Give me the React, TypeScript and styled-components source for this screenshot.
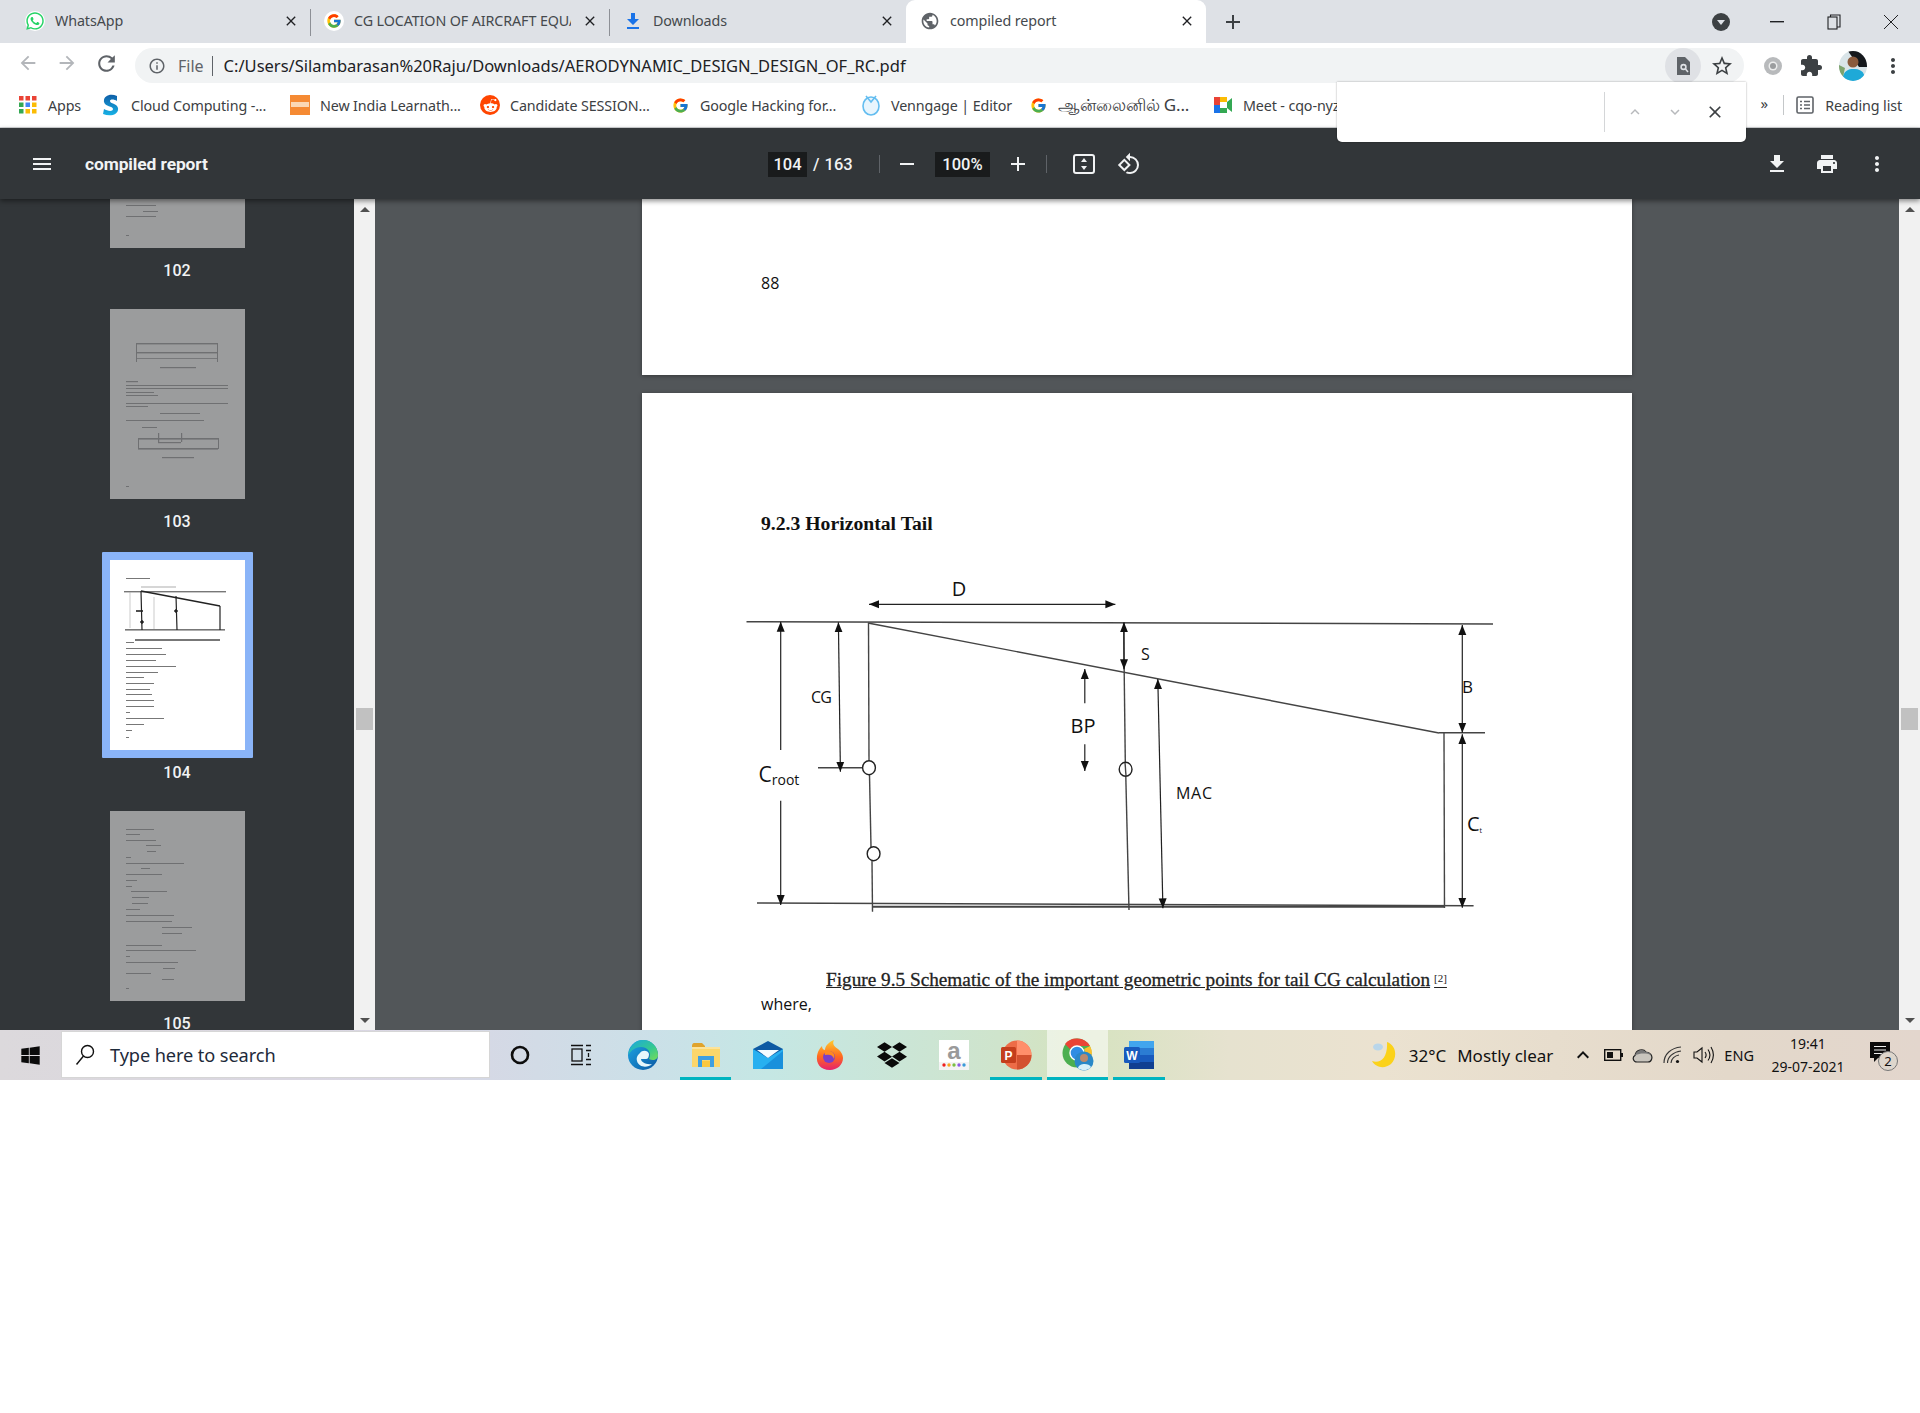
import React from "react";
import styled, { createGlobalStyle } from "styled-components";
import { FcGoogle } from "react-icons/fc";
import { FaWhatsapp, FaWindows, FaDropbox, FaRedditAlien } from "react-icons/fa";
import {
  MdArrowBack, MdArrowForward, MdRefresh, MdInfoOutline, MdClose, MdAdd, MdRemove, MdPublic,
  MdStarBorder, MdExtension, MdMoreVert, MdExpandLess, MdExpandMore, MdMenu, MdFileDownload,
  MdPrint, MdRotate90DegreesCcw, MdKeyboardArrowUp,
} from "react-icons/md";

const Global = createGlobalStyle`
  html, body { margin: 0; padding: 0; background: #fff; width: 1920px; height: 1413px; overflow: hidden; }
  * { box-sizing: border-box; }
  #root { font-family: "Noto Sans", "Liberation Sans", sans-serif; }
`;

const Screen = styled.div`
  width: 1920px; height: 1080px; display: flex; flex-direction: column; position: relative; overflow: hidden;
`;

/* ---------- tab strip ---------- */
const TabStrip = styled.div`
  height: 43px; background: #dee1e6; display: flex; align-items: stretch; padding-left: 17px; flex: none;
`;
const Tab = styled.div<{ $w: number; $active?: boolean; $sep?: boolean; $pad?: number }>`
  width: ${p => p.$w}px; display: flex; align-items: center; padding: 0 8px 2px ${p => p.$pad ?? 14}px; position: relative;
  background: ${p => (p.$active ? "#fff" : "transparent")};
  border-radius: ${p => (p.$active ? "9px 9px 0 0" : "0")};
  &::before {
    content: ""; display: ${p => (p.$sep ? "block" : "none")}; position: absolute; left: 0; top: 9px; bottom: 7px;
    width: 1px; background: #8d9096;
  }
`;
const TabIcon = styled.span<{ $chip?: boolean }>`
  width: 20px; height: 20px; display: flex; align-items: center; justify-content: center; flex: none; margin-right: 10px; border-radius: 50%;
  background: ${p => (p.$chip ? "#fff" : "transparent")};
`;
const TabTitle = styled.span`
  flex: 1; min-width: 0; font-size: 14.3px; color: #45494d; white-space: nowrap; overflow: hidden; letter-spacing: -0.1px; margin-right: 11px;
`;
const TabClose = styled.span`
  width: 16px; height: 16px; display: flex; align-items: center; justify-content: center; color: #202124; flex: none; margin-right: 3px; font-size: 16px;
`;
const NewTab = styled.span`
  width: 30px; margin-left: 12px; display: flex; align-items: center; justify-content: center; color: #3c4043; font-size: 24px;
`;
const WindowControls = styled.div`
  margin-left: auto; display: flex; align-items: center; padding-right: 20px;
`;
const ProfileDot = styled.span`
  width: 18px; height: 18px; border-radius: 50%; background: #3c4043; position: relative; margin-right: 38px;
  &::after {
    content: ""; position: absolute; left: 5px; top: 7px; border-left: 4px solid transparent; border-right: 4px solid transparent; border-top: 5px solid #dee1e6;
  }
`;
const WinButton = styled.span<{ $gap?: number }>`
  width: 18px; height: 18px; display: flex; align-items: center; justify-content: center; margin-right: ${p => p.$gap ?? 0}px; color: #3c4043;
`;

/* ---------- address row ---------- */
const AddressRow = styled.div`
  height: 40px; background: #fff; display: flex; align-items: center; flex: none; position: relative;
`;
const NavButton = styled.span<{ $w: number; $dim?: boolean }>`
  width: ${p => p.$w}px; display: flex; justify-content: center; font-size: 22px; color: ${p => (p.$dim ? "#b3b6ba" : "#5f6368")};
`;
const Omnibox = styled.div`
  width: 1609px; height: 35px; margin-top: 5px; background: #f1f3f4; border-radius: 18px; display: flex; align-items: center; padding-left: 13px;
`;
const OmniInfo = styled.span`
  display: flex; font-size: 18px; color: #5f6368; margin-right: 12px; width: 18px;
`;
const OmniFile = styled.span`
  font-size: 16px; color: #5f6368; padding-right: 8px; border-right: 1px solid #5f6368; line-height: 20px;
`;
const OmniUrl = styled.span`
  font-size: 16.5px; color: #202124; margin-left: 11px; white-space: nowrap;
`;
const OmniEnd = styled.div`
  margin-left: auto; display: flex; align-items: center; padding-right: 10px;
`;
const LensButton = styled.span`
  width: 36px; height: 36px; border-radius: 50%; background: #dfe1e5; display: flex; align-items: center; justify-content: center; margin-right: 9px; color: #5f6368; font-size: 18px;
`;
const StarButton = styled.span`
  display: flex; font-size: 24px; color: #3c4043;
`;
const AddressTools = styled.div`
  display: flex; align-items: center; margin-top: 5px; margin-left: 19px;
`;
const ToolSlot = styled.span<{ $w: number }>`
  width: ${p => p.$w}px; display: flex; justify-content: center; align-items: center; color: #3c4043; font-size: 24px;
`;

/* ---------- bookmarks ---------- */
const BookmarkBar = styled.div`
  height: 45px; background: #fff; border-bottom: 1px solid #d3d5d8; display: flex; align-items: center; padding-left: 18px; flex: none; position: relative;
`;
const Bookmark = styled.div<{ $w: number }>`
  width: ${p => p.$w}px; display: flex; align-items: center; flex: none;
`;
const BookmarkIcon = styled.span<{ $gap?: number }>`
  width: 20px; height: 20px; margin-right: ${p => p.$gap ?? 10}px; margin-left: ${p => (p.$gap ? 9 : 0)}px; display: flex; align-items: center; justify-content: center; flex: none;
`;
const BookmarkLabel = styled.span<{ $size?: number; $ml?: number }>`
  font-size: ${p => p.$size ?? 14.3}px; color: #3c4043; white-space: nowrap; letter-spacing: -0.12px; margin-left: ${p => p.$ml ?? 0}px;
`;
const BookmarkEnd = styled.div`
  margin-left: auto; display: flex; align-items: center; padding-right: 18px;
`;
const Chevrons = styled.span`
  font-size: 15px; color: #3c4043; margin-right: 15px; line-height: 1; padding-bottom: 3px;
`;
const EndSep = styled.span`
  width: 1px; height: 20px; background: #c4c7c9; margin-right: 12px;
`;

/* ---------- find bar ---------- */
const FindBar = styled.div`
  position: absolute; left: 1337px; top: 82px; width: 409px; height: 60px; background: #fff; border-radius: 0 0 5px 5px;
  box-shadow: 0 0 2px rgba(0,0,0,.4); display: flex; align-items: center; padding-left: 267px; z-index: 5;
`;
const FindSep = styled.span`
  width: 1px; height: 40px; background: #d4d6d8; margin-right: 20px;
`;
const FindBtn = styled.span<{ $on?: boolean }>`
  width: 20px; margin-right: 20px; display: flex; justify-content: center; font-size: ${p => (p.$on ? 20 : 18)}px; color: ${p => (p.$on ? "#3c4043" : "#b7b9bc")};
`;

/* ---------- pdf toolbar ---------- */
const PdfBar = styled.div`
  height: 71px; background: #323639; display: flex; align-items: center; flex: none; color: #f1f3f4; position: relative; z-index: 3;
  box-shadow: 0 2px 5px rgba(0,0,0,.45); padding: 1px 0 0 30px;
`;
const PdfIcon = styled.span<{ $w?: number; $size?: number; $ml?: number }>`
  width: ${p => p.$w ?? 24}px; display: flex; justify-content: center; align-items: center; font-size: ${p => p.$size ?? 24}px; color: #f1f3f4; flex: none; margin-left: ${p => p.$ml ?? 0}px;
`;
const PdfTitle = styled.span`
  font-family: Roboto, sans-serif; font-weight: 700; font-size: 17.4px; margin-left: 31px; width: 683px; letter-spacing: -0.1px; flex: none;
`;
const NumBox = styled.span<{ $w: number; $ml?: number }>`
  width: ${p => p.$w}px; height: 25px; background: #191b1c; display: flex; align-items: center; justify-content: center; font-family: Roboto, sans-serif; font-size: 16.5px; font-weight: 500; flex: none; margin-left: ${p => p.$ml ?? 0}px;
`;
const PageTotal = styled.span`
  font-family: Roboto, sans-serif; font-size: 16.5px; font-weight: 500; margin-left: 6px; width: 66px; flex: none; word-spacing: 1px;
`;
const BarSep = styled.span`
  width: 1px; height: 18px; background: #5f6368; flex: none;
`;
const BarRight = styled.div`
  margin-left: auto; display: flex; align-items: center; padding-right: 31px; gap: 26px;
`;

/* ---------- body ---------- */
const Body = styled.div`
  flex: 1; min-height: 0; display: flex; overflow: hidden;
`;
const Sidebar = styled.div`
  width: 354px; background: #323639; display: flex; flex-direction: column; align-items: center; overflow: hidden; flex: none;
`;
const ThumbItem = styled.div<{ $clip?: number }>`
  display: flex; flex-direction: column; align-items: center; flex: none; margin-top: ${p => (p.$clip ? `-${p.$clip}px` : "0")};
`;
const ThumbFrame = styled.div<{ $sel?: boolean }>`
  padding: 8px; background: ${p => (p.$sel ? "#8ab4f8" : "transparent")}; border-radius: 1px; width: 151px; height: 206px; flex: none;
`;
const ThumbSvg = styled.svg`
  display: block; width: 135px; height: 190px;
`;
const ThumbLines = styled.g`
  filter: blur(0.35px);
`;
const ThumbNo = styled.div`
  font-family: Roboto, sans-serif; font-size: 16px; font-weight: 500; color: #f1f3f4; line-height: 20px; margin: 5px 0 20px; letter-spacing: .1px;
`;
const Scrollbar = styled.div<{ $w: number }>`
  width: ${p => p.$w}px; flex: none; background: #f1f1f1; position: relative; display: flex; flex-direction: column; align-items: center; justify-content: space-between; padding: 8px 0 7px;
`;
const ScrollThumb = styled.div`
  position: absolute; left: 2px; right: 2px; top: 509px; height: 22px; background: #c1c1c1;
`;
const Arrow = styled.span<{ $up?: boolean }>`
  width: 0; height: 0; border-left: 5px solid transparent; border-right: 5px solid transparent;
  ${p => (p.$up ? "border-bottom: 5px solid #505050;" : "border-top: 5px solid #505050;")}
`;
const Main = styled.div`
  flex: 1; min-width: 0; background: #525659; display: flex; flex-direction: column; align-items: center; gap: 18px; overflow: hidden;
`;
const PageTail = styled.div`
  width: 990px; height: 176px; background: #fff; flex: none; padding: 73px 0 0 119px; box-shadow: 0 1px 4px rgba(0,0,0,.35);
  font-family: "Open Sans", "Noto Sans", sans-serif; font-size: 16px; color: #111; line-height: 22px;
`;
const PageSheet = styled.div`
  width: 990px; height: 700px; background: #fff; flex: none; padding-top: 119px; box-shadow: 0 1px 4px rgba(0,0,0,.35);
`;
const Heading = styled.div`
  font-family: "Liberation Serif", serif; font-weight: 700; font-size: 19.7px; color: #111; margin-left: 119px; line-height: 22px;
`;
const Diagram = styled.svg`
  display: block; width: 760px; height: 340px; margin: 46px 0 0 98px;
`;
const Caption = styled.div`
  font-family: "Liberation Serif", serif; font-weight: 400; -webkit-text-stroke: 0.3px #222; font-size: 19.25px; color: #222; text-decoration: underline; margin: 49px 0 0 184px; line-height: 22px; white-space: nowrap;
  sup { font-weight: 400; -webkit-text-stroke: 0; font-size: 11px; vertical-align: 4px; line-height: 0; margin-left: 4px; }
`;
const BodyText = styled.div`
  font-family: "Open Sans", "Noto Sans", sans-serif; font-size: 16px; color: #111; margin: 2px 0 0 119px; line-height: 22px;
`;

/* ---------- taskbar ---------- */
const Taskbar = styled.div`
  height: 50px; flex: none; display: flex; align-items: stretch; position: relative;
  background: linear-gradient(90deg, #dcd9dc 0%, #d9d6e4 22%, #cbe0e8 34%, #c5e7e4 40%, #cfe4cc 52%, #d5e3bf 56%, #e6e2cf 64%, #ebe2d0 72%, #e3d8ca 90%, #e3d6cd 100%);
`;
const StartButton = styled.div`
  width: 61px; display: flex; align-items: center; justify-content: center; font-size: 21px; color: #0b0b0b; flex: none;
`;
const SearchBox = styled.div`
  width: 429px; margin: 1px 0 2px; background: #fff; border: 1px solid #d6d6d6; display: flex; align-items: center; padding-left: 13px; flex: none;
`;
const SearchLabel = styled.span`
  font-size: 18.2px; color: #1e2a3a; margin-left: 15px; letter-spacing: -0.1px;
`;
const TaskSlot = styled.div<{ $w: number; $run?: boolean; $hi?: boolean }>`
  width: ${p => p.$w}px; flex: none; display: flex; align-items: center; justify-content: center; position: relative;
  background: ${p => (p.$hi ? "rgba(255,255,255,.55)" : "transparent")};
  &::after {
    content: ""; display: ${p => (p.$run ? "block" : "none")}; position: absolute; left: ${p => (p.$hi ? 0 : 5)}px; right: ${p => (p.$hi ? 0 : 5)}px; bottom: 0; height: 3px; background: #00b4c0;
  }
`;
const Tray = styled.div`
  margin-left: auto; display: flex; align-items: center; color: #111; flex: none;
`;
const TrayText = styled.span<{ $ml?: number; $size?: number }>`
  font-size: ${p => p.$size ?? 17}px; margin-left: ${p => p.$ml ?? 0}px; white-space: nowrap; color: #111;
`;
const TraySlot = styled.span<{ $w: number; $ml?: number }>`
  width: ${p => p.$w}px; display: flex; align-items: center; justify-content: center; flex: none; margin-left: ${p => p.$ml ?? 0}px; font-size: 24px;
`;
const Clock = styled.div`
  width: 92px; margin-left: 8px; display: flex; flex-direction: column; align-items: center; font-size: 14px; line-height: 23px; color: #111;
`;
const Badge = styled.span`
  position: absolute; right: -8px; bottom: -8px; width: 20px; height: 20px; border-radius: 50%; background: #ddd6cc; border: 1px solid #777; font-size: 13px; display: flex; align-items: center; justify-content: center; color: #111;
`;
const NotifyIcon = styled.span`
  position: relative; display: flex; margin: 0 30px 6px 16px;
`;
const Blank = styled.div`
  height: 333px; background: #fff;
`;

/* ---------- drawings ---------- */
const AppsIcon = () => (
  <svg width="18" height="18" viewBox="0 0 18 18">
    {["#ea4335", "#ea4335", "#ea4335", "#34a853", "#4285f4", "#fbbc05", "#34a853", "#fbbc05", "#fbbc05"].map((c, i) => (
      <rect key={i} x={(i % 3) * 6.5} y={Math.floor(i / 3) * 6.5} width="4.5" height="4.5" fill={c} />
    ))}
  </svg>
);
const CloudS = () => (
  <svg width="18" height="22" viewBox="0 0 18 22">
    <defs><linearGradient id="cs" x1="0" y1="0" x2="0" y2="1"><stop offset="0" stopColor="#0f5fa8" /><stop offset="1" stopColor="#17b2e6" /></linearGradient></defs>
    <path d="M15 2 C8 -1 1 2 2 8 C3 13 11 12 11 15 C11 18 5 17 2 15 L1 20 C8 23 17 21 16 14 C15 9 8 10 8 7 C8 5 12 5 15 7 Z" fill="url(#cs)" />
  </svg>
);
const NewIndia = () => (
  <svg width="20" height="20" viewBox="0 0 20 20">
    <rect width="20" height="20" fill="#f58a33" />
    <rect x="1" y="7" width="18" height="5" fill="#fbd8b4" />
  </svg>
);
const RedditChip = styled.span`
  display: flex; width: 20px; height: 20px; border-radius: 50%; background: #ff4500; align-items: center; justify-content: center;
`;
const Reddit = () => <RedditChip><FaRedditAlien size={15} color="#fff" /></RedditChip>;
const Venngage = () => (
  <svg width="20" height="22" viewBox="0 0 20 22">
    <ellipse cx="10" cy="12" rx="8" ry="9" fill="#e8f5fd" stroke="#63bdf0" strokeWidth="1.6" />
    <path d="M5 2 L10 8 L15 2" fill="none" stroke="#63bdf0" strokeWidth="1.6" />
  </svg>
);
const MeetIcon = () => (
  <svg width="20" height="18" viewBox="0 0 20 18">
    <rect x="1" y="1" width="6" height="8" fill="#ea4335" />
    <rect x="7" y="1" width="7" height="5" fill="#fbbc05" />
    <rect x="1" y="9" width="6" height="8" fill="#1a73e8" />
    <rect x="7" y="12" width="7" height="5" fill="#34a853" />
    <path d="M14 6 L19 2 V16 L14 12 Z" fill="#34a853" />
    <rect x="7" y="6" width="7" height="6" fill="#fff" />
  </svg>
);
const DownloadTab = () => (
  <svg width="16" height="18" viewBox="0 0 16 18" fill="#1a73e8">
    <path d="M6 1 H10 V7 H14 L8 13 L2 7 H6 Z" />
    <rect x="2" y="15" width="12" height="2" />
  </svg>
);
const RestoreIcon = () => (
  <svg width="14" height="16" viewBox="0 0 14 16" fill="none" stroke="#202124" strokeWidth="1.1">
    <rect x="1" y="3" width="9" height="12" />
    <path d="M3.5 3 V1 H13 V13 H10" />
  </svg>
);
const XWin = () => (
  <svg width="16" height="16" viewBox="0 0 16 16" stroke="#202124" strokeWidth="1"><path d="M1 1 L15 15 M15 1 L1 15" /></svg>
);
const MinWin = () => (
  <svg width="14" height="2" viewBox="0 0 14 2"><rect width="14" height="1.4" fill="#202124" /></svg>
);
const Lens = () => (
  <svg width="18" height="20" viewBox="0 0 18 20">
    <path d="M3 1 H11 L16 6 V19 H3 Z" fill="#5f6368" />
    <circle cx="9.5" cy="11" r="3.2" fill="#dfe1e5" />
    <circle cx="9.5" cy="11" r="1.6" fill="#5f6368" />
    <path d="M11.5 13 L14 16" stroke="#dfe1e5" strokeWidth="1.5" />
  </svg>
);
const ChromeGrey = () => (
  <svg width="20" height="20" viewBox="0 0 20 20">
    <circle cx="10" cy="10" r="9" fill="#b8babc" />
    <circle cx="10" cy="10" r="4.5" fill="#eceded" />
    <circle cx="10" cy="10" r="3" fill="#9b9d9f" />
  </svg>
);
const Avatar = () => (
  <svg width="28" height="30" viewBox="0 0 28 30">
    <clipPath id="av"><ellipse cx="14" cy="15" rx="14" ry="15" /></clipPath>
    <g clipPath="url(#av)">
      <rect width="28" height="30" fill="#d9e4e8" />
      <path d="M9 0 H28 V16 H20 Z" fill="#15181c" />
      <circle cx="14" cy="11" r="5.5" fill="#8a5a3c" />
      <path d="M3 30 C4 19 10 18 14 18 C20 18 26 19 26 30 Z" fill="#1ea9d8" />
      <path d="M0 14 L6 17 L4 26 L0 24 Z" fill="#7da36e" />
    </g>
  </svg>
);
const ReadingList = () => (
  <svg width="18" height="18" viewBox="0 0 18 18" fill="none" stroke="#5f6368" strokeWidth="1.6">
    <rect x="1" y="1" width="16" height="16" rx="1.5" />
    <path d="M4 5.5 H6 M8 5.5 H14 M4 9 H6 M8 9 H14 M4 12.5 H6 M8 12.5 H14" />
  </svg>
);
const FitIcon = () => (
  <svg width="24" height="22" viewBox="0 0 24 22">
    <rect x="2" y="2" width="20" height="18" rx="2" fill="none" stroke="#f1f3f4" strokeWidth="2" />
    <path d="M12 5 L15 9 H9 Z M12 17 L9 13 H15 Z" fill="#f1f3f4" />
  </svg>
);
const SearchGlass = () => (
  <svg width="20" height="22" viewBox="0 0 20 22" fill="none" stroke="#111" strokeWidth="1.4">
    <circle cx="12.5" cy="7.5" r="6" />
    <path d="M8.5 12 L1.5 20.5" />
  </svg>
);
const Cortana = () => (
  <svg width="22" height="22" viewBox="0 0 22 22"><circle cx="11" cy="11" r="8" fill="none" stroke="#0d0d0d" strokeWidth="2.6" /></svg>
);
const TaskView = () => (
  <svg width="22" height="22" viewBox="0 0 22 22" fill="none" stroke="#111" strokeWidth="1.3">
    <path d="M1 1.5 H13 M1 20.5 H13" />
    <rect x="2" y="5" width="10" height="12" />
    <path d="M16 1.5 H21 M16 6.5 H21 M16 15.5 H21 M16 20.5 H21 M18.5 9 V13" />
  </svg>
);
const EdgeIcon = () => (
  <svg width="32" height="32" viewBox="0 0 32 32">
    <defs>
      <linearGradient id="ed" x1="0" y1="0" x2="1" y2="1"><stop offset="0" stopColor="#1da7e6" /><stop offset="1" stopColor="#0c58a2" /></linearGradient>
      <linearGradient id="eg" x1="0" y1="0" x2="1" y2="1"><stop offset="0" stopColor="#1ba8e0" /><stop offset=".6" stopColor="#35c98f" /><stop offset="1" stopColor="#78dc58" /></linearGradient>
    </defs>
    <circle cx="16" cy="16" r="15" fill="url(#ed)" />
    <path d="M16 1 A15 15 0 0 1 31 16 C31 21 26 22 22 20 C25 14 21 8 14 8 C9 8 4 11 1.5 16 C2 7 9 1 16 1 Z" fill="url(#eg)" />
    <path d="M13 14 C15 11 21 11 22 15 C22 18 21 20 19 20 H14 C14 23 19 26 25 25 C21 29 12 29 10 22 C9 18 11 16 13 14 Z" fill="#e8f7fb" />
  </svg>
);
const ExplorerIcon = () => (
  <svg width="28" height="24" viewBox="0 0 28 24">
    <path d="M0 3 C0 1 1 0 2 0 H10 L13 3 V6 H0 Z" fill="#e0a32c" />
    <rect y="4" width="28" height="20" fill="#fcd66a" />
    <rect y="4" width="28" height="2" fill="#fce39a" />
    <path d="M6 24 V13 H22 V24 H18 V17 H10 V24 Z" fill="#3f9fe0" />
    <rect x="10" y="18" width="8" height="6" fill="#fcc83d" />
  </svg>
);
const MailIcon = () => (
  <svg width="30" height="28" viewBox="0 0 30 28">
    <rect y="8" width="30" height="20" fill="#28b0f0" />
    <path d="M0 8 L15 0 L30 8 L15 17 Z" fill="#0e5aa3" />
    <path d="M4 9 H26 L15 17 Z" fill="#f4fbff" />
    <path d="M30 10 V28 H8 Z" fill="#1990dc" />
  </svg>
);
const FirefoxIcon = () => (
  <svg width="30" height="32" viewBox="0 0 30 32">
    <defs><linearGradient id="ff" x1="0" y1="0" x2="0" y2="1"><stop offset="0" stopColor="#ffcb2f" /><stop offset=".55" stopColor="#ff6a1f" /><stop offset="1" stopColor="#e6216f" /></linearGradient></defs>
    <path d="M15 31 C5 31 1 24 2 17 C3 11 6 8 7 7 C7 10 9 11 10 11 C10 7 14 3 19 1 C17 5 19 7 23 10 C27 13 28 17 28 19 C28 26 22 31 15 31 Z" fill="url(#ff)" />
    <circle cx="14" cy="18" r="6" fill="#7a3ec8" />
    <path d="M9 12 C16 10 21 14 19 20 C18 16 15 15 10 16 Z" fill="#ff8a1f" />
  </svg>
);
const AmazonIcon = () => (
  <svg width="30" height="30" viewBox="0 0 30 30">
    <rect width="30" height="30" fill="#f4f4f4" />
    <rect width="30" height="22" fill="#fff" />
    <text x="15" y="19" fontFamily="Liberation Sans, sans-serif" fontWeight="700" fontSize="24" fill="#9a9a9a" textAnchor="middle">a</text>
    {["#f02020", "#f6a623", "#7bbf43", "#8e58e6", "#3a9ad9"].map((c, i) => (
      <circle key={i} cx={5 + i * 5} cy="25" r="1.7" fill={c} />
    ))}
  </svg>
);
const PptIcon = () => (
  <svg width="32" height="30" viewBox="0 0 32 30">
    <circle cx="17" cy="15" r="14.5" fill="#ed6c47" />
    <path d="M17 .5 A14.5 14.5 0 0 1 31.5 15 H17 Z" fill="#ff8f6b" />
    <path d="M17 15 H31.5 A14.5 14.5 0 0 1 17 29.5 Z" fill="#d35230" />
    <rect x="1" y="7" width="15" height="16" rx="1.5" fill="#c43e1c" />
    <text x="8.5" y="19.5" fontFamily="Liberation Sans, sans-serif" fontWeight="700" fontSize="12" fill="#fff" textAnchor="middle">P</text>
  </svg>
);
const ChromeAvatarIcon = () => (
  <svg width="36" height="34" viewBox="0 0 36 34" style={{ marginLeft: 5 }}>
    <circle cx="15" cy="15" r="14.5" fill="#4caf50" />
    <path d="M15 .5 A14.5 14.5 0 0 1 28 8 H15 A7.5 7.5 0 0 0 8 11 L3 6 A14.5 14.5 0 0 1 15 .5 Z" fill="#ea4335" />
    <path d="M28 8 A14.5 14.5 0 0 1 15 29.5 L22 19 A7.5 7.5 0 0 0 22 11 Z" fill="#fbc02d" />
    <circle cx="15" cy="15" r="7" fill="#2f8de4" stroke="#fff" strokeWidth="1.4" />
    <circle cx="22" cy="23" r="9.5" fill="#2a88c8" />
    <circle cx="22" cy="20" r="4" fill="#b98a6f" />
    <path d="M16 30 C17 25 27 25 29 29 C26 33 19 33 16 30 Z" fill="#d8f0fa" />
  </svg>
);
const WordIcon = () => (
  <svg width="32" height="30" viewBox="0 0 32 30">
    <rect x="6" y="1" width="25" height="28" rx="1.5" fill="#2b7cd3" />
    <rect x="6" y="1" width="25" height="7" fill="#41a5ee" />
    <rect x="6" y="15" width="25" height="7" fill="#185abd" />
    <rect x="6" y="22" width="25" height="7" fill="#103f91" />
    <rect x="1" y="7" width="16" height="16" rx="1.5" fill="#185abd" />
    <text x="9" y="19.5" fontFamily="Liberation Sans, sans-serif" fontWeight="700" fontSize="12" fill="#fff" textAnchor="middle">W</text>
  </svg>
);
const MoonIcon = () => (
  <svg width="26" height="28" viewBox="0 0 26 28">
    <path d="M16 1 C25 4 27 16 20 23 C14 28 5 27 1 20 C9 23 17 17 16 1 Z" fill="#fbd21a" />
    <ellipse cx="7" cy="6" rx="5" ry="3.5" fill="#b9d6ea" />
  </svg>
);
const Battery = () => (
  <svg width="19" height="12" viewBox="0 0 19 12">
    <rect x=".7" y=".7" width="16" height="10.6" fill="none" stroke="#111" strokeWidth="1.4" />
    <rect x="3" y="3" width="6" height="6" fill="#111" />
    <rect x="17" y="4" width="2" height="4" fill="#111" />
  </svg>
);
const CloudTray = () => (
  <svg width="21" height="16" viewBox="0 0 21 16">
    <path d="M5 15 C1 15 0 10 3 8.5 C4 3 11 1 14 5 C18 5 21 9 19.5 12.5 C19 14 18 15 16 15 Z" fill="#c9c5bd" stroke="#222" strokeWidth="1.2" />
    <path d="M3 8.5 C4 3 11 1 14 5 C16 5 18 6 19 8 C14 6 8 6 3 8.5 Z" fill="#777" />
  </svg>
);
const Wifi = () => (
  <svg width="20" height="18" viewBox="0 0 20 18" fill="none" stroke="#333" strokeWidth="1.1">
    <path d="M1 17 C1 8 8 2 18 1 M4.5 17 C4.5 11 10 6 18 5 M8 17 C8 13 12 9.5 16 9" />
    <circle cx="14.5" cy="15.5" r="1.6" fill="#111" stroke="none" />
  </svg>
);
const Speaker = () => (
  <svg width="21" height="18" viewBox="0 0 21 18" fill="none" stroke="#111" strokeWidth="1.1">
    <path d="M1 6 H4 L9 2 V16 L4 12 H1 Z" />
    <path d="M12 6 C13.5 8 13.5 10 12 12 M15 3.5 C17.5 7 17.5 11 15 14.5 M18 1 C21 6 21 12 18 17" />
  </svg>
);
const Notify = () => (
  <svg width="20" height="21" viewBox="0 0 20 21">
    <path d="M0 0 H20 V16 H8 L4 20 V16 H0 Z" fill="#0b0b0b" />
    <path d="M4 4.5 H16 M4 8 H16 M4 11.5 H16" stroke="#eee" strokeWidth="1.2" />
  </svg>
);

/* thumbnails */
const greyLines = (rows: number[][], col: string) =>
  rows.map((r, i) => <rect key={i} x={r[0]} y={r[1]} width={r[2]} height={r[3] ?? 1} fill={col} />);

const page102 = [[16, 147, 30], [33, 153, 15], [16, 158, 30], [16, 177, 3]];
const page103 = [
  [26, 34, 82, 1.4], [26, 34, 1, 19], [107, 34, 1, 19], [26, 43, 82, 1.4], [26, 49, 82, 0.8], [50, 58, 36, 1.2],
  [16, 72, 12, 1.2], [16, 76, 102], [16, 79, 102], [16, 83, 28], [16, 86, 32], [16, 94, 102], [16, 97, 22], [50, 104, 40], [16, 111, 78], [32, 118, 15],
  [28, 129, 80, 1.6], [28, 139, 80, 1.6], [28, 129, 1, 11], [108, 129, 1, 11], [48, 124, 1.2, 9], [71, 124, 1.2, 9], [48, 133, 23, 1.2], [52, 148, 32, 1.2], [16, 177, 3],
];
const page104 = [
  [16, 18, 24], [14, 31, 102, 1.4], [15, 69, 100, 1.6], [25, 79, 85, 2], [16, 82, 8], [16, 88, 36], [16, 94, 40], [16, 100, 30], [16, 106, 50], [16, 112, 32], [16, 117, 18], [16, 123, 28], [16, 129, 24], [16, 134, 26], [16, 140, 28], [16, 146, 28], [16, 152, 4], [16, 158, 38], [16, 164, 18], [16, 170, 6], [16, 177, 3],
];
const page105 = [
  [16, 18, 28], [16, 23, 14], [16, 29, 30], [36, 34, 15], [37, 40, 9], [16, 46, 5], [16, 52, 58], [31, 57, 9], [16, 63, 36], [16, 69, 11], [16, 75, 6], [21, 80, 36], [22, 86, 17], [22, 92, 16], [16, 98, 14], [16, 104, 48], [16, 110, 46], [52, 116, 30], [52, 122, 20], [16, 134, 36], [16, 139, 70], [16, 145, 4], [16, 151, 52], [53, 157, 12], [16, 162, 25], [52, 168, 12], [16, 177, 3],
];

const Thumb = ({ rows, white, extra }: { rows: number[][]; white?: boolean; extra?: React.ReactNode }) => (
  <ThumbSvg viewBox="0 0 135 190">
    <rect width="135" height="190" fill={white ? "#fff" : "#9b9c9d"} />
    <ThumbLines>{greyLines(rows, white ? "#777" : "#6f7072")}{extra}</ThumbLines>
  </ThumbSvg>
);
const MiniWing = () => (
  <g stroke="#222" fill="none">
    <path d="M31 31 L110 46" strokeWidth="1.4" />
    <path d="M31 31 L32 70 M66 36 L67 70 M110 46 L110 70" strokeWidth="1.2" />
    <path d="M20 32 V68 M44 37 V69" stroke="#aaa" strokeWidth=".6" />
    <path d="M26 51 H33" strokeWidth="1.6" />
    <circle cx="32" cy="62" r="1.3" fill="#222" />
    <circle cx="66" cy="51" r="1.3" fill="#222" />
    <path d="M31 27 H66" stroke="#777" strokeWidth=".6" />
  </g>
);

const Arrowed = ({ x1, y1, x2, y2, start, end }: { x1: number; y1: number; x2: number; y2: number; start?: boolean; end?: boolean }) => (
  <line x1={x1} y1={y1} x2={x2} y2={y2} stroke="#222" strokeWidth="1.2" markerStart={start ? "url(#hs)" : undefined} markerEnd={end ? "url(#he)" : undefined} />
);

const labelFont = "'Open Sans', 'Noto Sans', sans-serif";

const WingDiagram = () => (
  <Diagram viewBox="740 580 760 340">
    <defs>
      <marker id="he" markerUnits="userSpaceOnUse" markerWidth="10" markerHeight="10" refX="10" refY="5" orient="auto">
        <path d="M0 1 L10 5 L0 9 Z" fill="#111" />
      </marker>
      <marker id="hs" markerUnits="userSpaceOnUse" markerWidth="10" markerHeight="10" refX="0" refY="5" orient="auto">
        <path d="M10 1 L0 5 L10 9 Z" fill="#111" />
      </marker>
    </defs>
    <g stroke="#444" fill="none" strokeWidth="1.4">
      <line x1="746.5" y1="621.7" x2="1493" y2="624" />
      <line x1="868" y1="623" x2="1439" y2="733" />
      <line x1="868.5" y1="623" x2="869" y2="761" />
      <line x1="869.5" y1="775" x2="871" y2="847" />
      <line x1="872" y1="861" x2="872.5" y2="911.7" />
      <line x1="1123.6" y1="623" x2="1125.3" y2="762" />
      <line x1="1125.8" y1="776.5" x2="1129" y2="910" />
      <line x1="757" y1="903" x2="1473.6" y2="905.7" />
      <line x1="873" y1="906.7" x2="1444.5" y2="906.7" strokeWidth="2" />
      <line x1="1439" y1="732.7" x2="1485" y2="732.7" />
      <line x1="1444" y1="733" x2="1444.5" y2="908" />
      <line x1="818" y1="767.7" x2="862" y2="767.7" />
      <line x1="1125" y1="762" x2="1126" y2="776" />
      <ellipse cx="869" cy="767.7" rx="6.4" ry="7" stroke="#222" fill="#fff" />
      <ellipse cx="873.6" cy="853.7" rx="6.4" ry="7" stroke="#222" fill="#fff" />
      <ellipse cx="1125.6" cy="769.3" rx="6.4" ry="7" stroke="#222" />
    </g>
    <Arrowed x1={780.7} y1={621.7} x2={780.7} y2={750} start />
    <Arrowed x1={780.7} y1={800.7} x2={780.7} y2={905} end />
    <Arrowed x1={838.4} y1={622.3} x2={840.4} y2={771.7} start end />
    <Arrowed x1={869} y1={604.3} x2={1115.4} y2={604.3} start end />
    <Arrowed x1={1124} y1={622.3} x2={1124} y2={669.3} start end />
    <Arrowed x1={1084.8} y1={669} x2={1084.8} y2={703.3} start />
    <Arrowed x1={1084.8} y1={744.3} x2={1084.8} y2={771} end />
    <Arrowed x1={1157.8} y1={679} x2={1162.9} y2={908.3} start end />
    <Arrowed x1={1462.3} y1={625} x2={1462.3} y2={732.7} start end />
    <Arrowed x1={1462.3} y1={734.3} x2={1462.3} y2={907.7} start end />
    <g fontFamily={labelFont} fill="#111">
      <text x="959" y="596" fontSize="20" textAnchor="middle">D</text>
      <text x="1145.5" y="660" fontSize="16" textAnchor="middle">S</text>
      <text x="821.5" y="703" fontSize="16" textAnchor="middle" textLength="21">CG</text>
      <text x="1083" y="733" fontSize="20" textAnchor="middle" textLength="25">BP</text>
      <text x="1194" y="799" fontSize="16" textAnchor="middle" textLength="36">MAC</text>
      <text x="758.5" y="782" fontSize="21">C<tspan fontSize="14" dy="3">root</tspan></text>
      <text x="1462" y="693" fontSize="17">B</text>
      <text x="1467" y="831" fontSize="20">C<tspan fontSize="7" dy="2">t</tspan></text>
    </g>
  </Diagram>
);

export default function App() {
  return (
    <>
      <Global />
      <Screen>
        <TabStrip>
          <Tab $w={293} $pad={8}>
            <TabIcon $chip><FaWhatsapp size={20} color="#25d366" /></TabIcon>
            <TabTitle>WhatsApp</TabTitle>
            <TabClose><MdClose /></TabClose>
          </Tab>
          <Tab $w={299} $sep>
            <TabIcon $chip><FcGoogle size={16} /></TabIcon>
            <TabTitle>CG LOCATION OF AIRCRAFT EQUATION</TabTitle>
            <TabClose><MdClose /></TabClose>
          </Tab>
          <Tab $w={297} $sep>
            <TabIcon><DownloadTab /></TabIcon>
            <TabTitle>Downloads</TabTitle>
            <TabClose><MdClose /></TabClose>
          </Tab>
          <Tab $w={300} $active>
            <TabIcon><MdPublic size={20} color="#5f6368" /></TabIcon>
            <TabTitle>compiled report</TabTitle>
            <TabClose><MdClose /></TabClose>
          </Tab>
          <NewTab><MdAdd /></NewTab>
          <WindowControls>
            <ProfileDot />
            <WinButton $gap={39}><MinWin /></WinButton>
            <WinButton $gap={39}><RestoreIcon /></WinButton>
            <WinButton><XWin /></WinButton>
          </WindowControls>
        </TabStrip>

        <AddressRow>
          <NavButton $w={56} $dim><MdArrowBack /></NavButton>
          <NavButton $w={22} $dim><MdArrowForward /></NavButton>
          <NavButton $w={57}><MdRefresh size={25} /></NavButton>
          <Omnibox>
            <OmniInfo><MdInfoOutline /></OmniInfo>
            <OmniFile>File</OmniFile>
            <OmniUrl>C:/Users/Silambarasan%20Raju/Downloads/AERODYNAMIC_DESIGN_DESIGN_OF_RC.pdf</OmniUrl>
            <OmniEnd>
              <LensButton><Lens /></LensButton>
              <StarButton><MdStarBorder /></StarButton>
            </OmniEnd>
          </Omnibox>
          <AddressTools>
            <ToolSlot $w={20}><ChromeGrey /></ToolSlot>
            <ToolSlot $w={56}><MdExtension /></ToolSlot>
            <ToolSlot $w={28}><Avatar /></ToolSlot>
            <ToolSlot $w={52}><MdMoreVert /></ToolSlot>
          </AddressTools>
        </AddressRow>

        <BookmarkBar>
          <Bookmark $w={83}><BookmarkIcon><AppsIcon /></BookmarkIcon><BookmarkLabel>Apps</BookmarkLabel></Bookmark>
          <Bookmark $w={189}><BookmarkIcon><CloudS /></BookmarkIcon><BookmarkLabel>Cloud Computing -...</BookmarkLabel></Bookmark>
          <Bookmark $w={190}><BookmarkIcon><NewIndia /></BookmarkIcon><BookmarkLabel>New India Learnath...</BookmarkLabel></Bookmark>
          <Bookmark $w={190}><BookmarkIcon><Reddit /></BookmarkIcon><BookmarkLabel>Candidate SESSION...</BookmarkLabel></Bookmark>
          <Bookmark $w={191}><BookmarkIcon><FcGoogle size={17} /></BookmarkIcon><BookmarkLabel>Google Hacking for...</BookmarkLabel></Bookmark>
          <Bookmark $w={167}><BookmarkIcon><Venngage /></BookmarkIcon><BookmarkLabel>Venngage | Editor</BookmarkLabel></Bookmark>
          <Bookmark $w={176}><BookmarkIcon><FcGoogle size={17} /></BookmarkIcon><BookmarkLabel $size={17}>ஆன்லைனில் G...</BookmarkLabel></Bookmark>
          <Bookmark $w={150}><BookmarkIcon $gap={10}><MeetIcon /></BookmarkIcon><BookmarkLabel>Meet - cqo-nyzu-xdd</BookmarkLabel></Bookmark>
          <BookmarkEnd>
            <Chevrons>»</Chevrons>
            <EndSep />
            <ReadingList />
            <BookmarkLabel $ml={11}>Reading list</BookmarkLabel>
          </BookmarkEnd>
        </BookmarkBar>

        <FindBar>
          <FindSep />
          <FindBtn><MdExpandLess /></FindBtn>
          <FindBtn><MdExpandMore /></FindBtn>
          <FindBtn $on><MdClose /></FindBtn>
        </FindBar>

        <PdfBar>
          <PdfIcon $size={28}><MdMenu /></PdfIcon>
          <PdfTitle>compiled report</PdfTitle>
          <NumBox $w={39}>104</NumBox>
          <PageTotal>/ 163</PageTotal>
          <BarSep />
          <PdfIcon $w={54}><MdRemove /></PdfIcon>
          <NumBox $w={55} $ml={1}>100%</NumBox>
          <PdfIcon $w={56}><MdAdd /></PdfIcon>
          <BarSep />
          <PdfIcon $w={24} $ml={25}><FitIcon /></PdfIcon>
          <PdfIcon $w={24} $ml={21}><MdRotate90DegreesCcw /></PdfIcon>
          <BarRight>
            <PdfIcon><MdFileDownload /></PdfIcon>
            <PdfIcon><MdPrint /></PdfIcon>
            <PdfIcon><MdMoreVert /></PdfIcon>
          </BarRight>
        </PdfBar>

        <Body>
          <Sidebar>
            <ThumbItem $clip={149}>
              <ThumbFrame><Thumb rows={page102} /></ThumbFrame>
              <ThumbNo>102</ThumbNo>
            </ThumbItem>
            <ThumbItem>
              <ThumbFrame><Thumb rows={page103} /></ThumbFrame>
              <ThumbNo>103</ThumbNo>
            </ThumbItem>
            <ThumbItem>
              <ThumbFrame $sel><Thumb rows={page104} white extra={<MiniWing />} /></ThumbFrame>
              <ThumbNo>104</ThumbNo>
            </ThumbItem>
            <ThumbItem>
              <ThumbFrame><Thumb rows={page105} /></ThumbFrame>
              <ThumbNo>105</ThumbNo>
            </ThumbItem>
          </Sidebar>
          <Scrollbar $w={21}>
            <Arrow $up /><ScrollThumb /><Arrow />
          </Scrollbar>
          <Main>
            <PageTail>88</PageTail>
            <PageSheet>
              <Heading>9.2.3 Horizontal Tail</Heading>
              <WingDiagram />
              <Caption>Figure 9.5 Schematic of the important geometric points for tail CG calculation<sup>[2]</sup></Caption>
              <BodyText>where,</BodyText>
            </PageSheet>
          </Main>
          <Scrollbar $w={21}>
            <Arrow $up /><ScrollThumb /><Arrow />
          </Scrollbar>
        </Body>

        <Taskbar>
          <StartButton><FaWindows /></StartButton>
          <SearchBox>
            <SearchGlass />
            <SearchLabel>Type here to search</SearchLabel>
          </SearchBox>
          <TaskSlot $w={60}><Cortana /></TaskSlot>
          <TaskSlot $w={61}><TaskView /></TaskSlot>
          <TaskSlot $w={64}><EdgeIcon /></TaskSlot>
          <TaskSlot $w={61} $run><ExplorerIcon /></TaskSlot>
          <TaskSlot $w={63}><MailIcon /></TaskSlot>
          <TaskSlot $w={61}><FirefoxIcon /></TaskSlot>
          <TaskSlot $w={63}><FaDropbox size={30} color="#0a0a0a" /></TaskSlot>
          <TaskSlot $w={62}><AmazonIcon /></TaskSlot>
          <TaskSlot $w={62} $run><PptIcon /></TaskSlot>
          <TaskSlot $w={61} $run $hi><ChromeAvatarIcon /></TaskSlot>
          <TaskSlot $w={62} $run><WordIcon /></TaskSlot>
          <Tray>
            <TraySlot $w={30}><MoonIcon /></TraySlot>
            <TrayText $ml={10}>32°C</TrayText>
            <TrayText $ml={11}>Mostly clear</TrayText>
            <TraySlot $w={30} $ml={15}><MdKeyboardArrowUp /></TraySlot>
            <TraySlot $w={30}><Battery /></TraySlot>
            <TraySlot $w={29}><CloudTray /></TraySlot>
            <TraySlot $w={32}><Wifi /></TraySlot>
            <TraySlot $w={28}><Speaker /></TraySlot>
            <TrayText $ml={7} $size={14.5}>ENG</TrayText>
            <Clock><span>19:41</span><span>29-07-2021</span></Clock>
            <NotifyIcon><Notify /><Badge>2</Badge></NotifyIcon>
          </Tray>
        </Taskbar>
      </Screen>
      <Blank />
    </>
  );
}
